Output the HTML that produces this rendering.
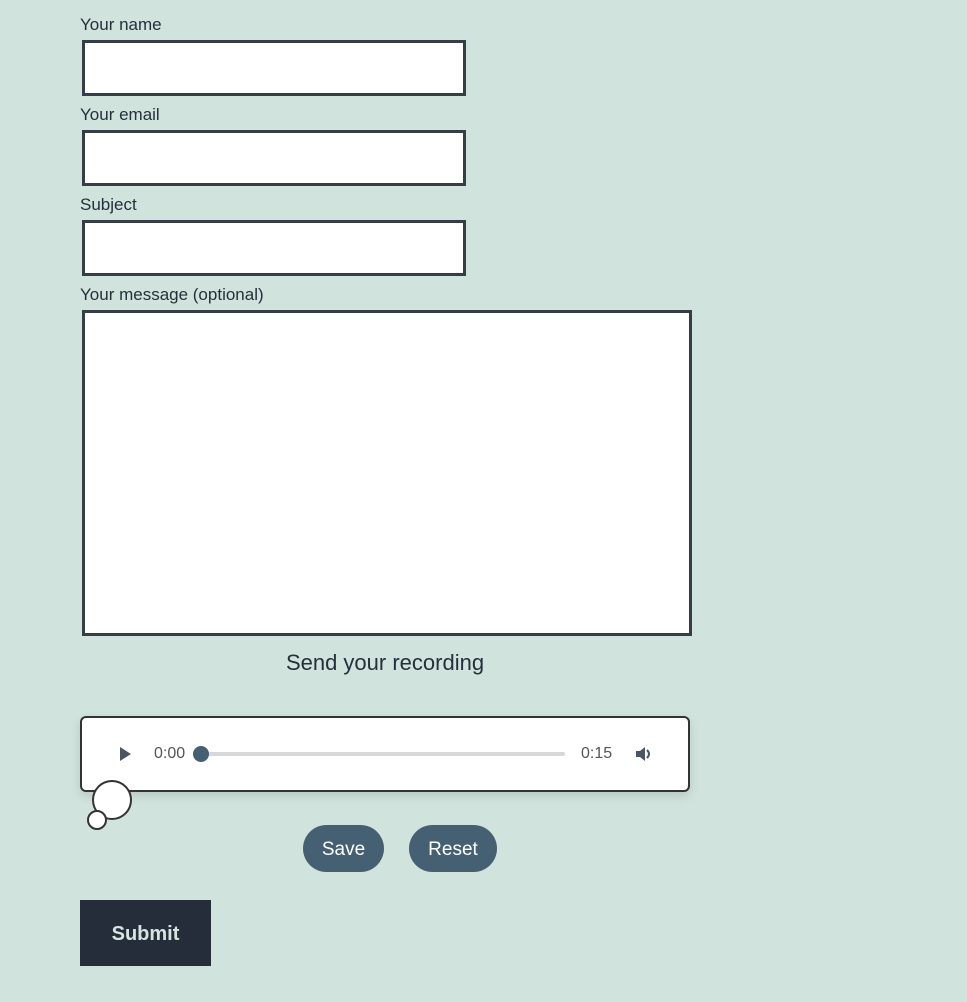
<!DOCTYPE html>
<html><head><style>
body{margin:0;background:#d1e3dd;font-family:"Liberation Sans",sans-serif;color:#24303c;width:967px;height:1002px;position:relative;overflow:hidden}
.l{position:absolute;left:80px;font-size:17px}
.in{position:absolute;left:82px;background:#fff;border:3px solid #353d47;box-sizing:border-box}
.btn{position:absolute;top:825px;height:47px;border-radius:24px;background:#466073;color:#fff;font-size:19px;text-align:center;line-height:50px}
</style></head><body>
<div class="l" style="top:15px">Your name</div>
<div class="in" style="top:40px;width:384px;height:56px"></div>
<div class="l" style="top:105px">Your email</div>
<div class="in" style="top:130px;width:384px;height:56px"></div>
<div class="l" style="top:195px">Subject</div>
<div class="in" style="top:220px;width:384px;height:56px"></div>
<div class="l" style="top:285px">Your message (optional)</div>
<div class="in" style="top:310px;width:610px;height:326px"></div>
<div style="position:absolute;left:80px;width:610px;top:650px;text-align:center;font-size:22px">Send your recording</div>
<div style="position:absolute;left:80px;top:716px;width:610px;height:76px;box-sizing:border-box;background:#fff;border:2px solid #333;border-radius:6px;box-shadow:0 4px 10px rgba(0,0,0,.12)">
<svg style="position:absolute;left:36px;top:28px" width="14" height="16"><path d="M2 1L13 8L2 15Z" fill="#4b5563"/></svg>
<span style="position:absolute;left:72px;top:27px;font-size:16px;color:#555">0:00</span>
<div style="position:absolute;left:118px;top:34px;width:365px;height:4px;background:#d8d8d8;border-radius:2px"></div>
<div style="position:absolute;left:111px;top:28px;width:16px;height:16px;border-radius:50%;background:#466073"></div>
<span style="position:absolute;left:499px;top:27px;font-size:16px;color:#555">0:15</span>
<svg style="position:absolute;left:552px;top:27px" width="20" height="18"><path d="M2 6H6L11 2V16L6 12H2Z" fill="#4b5563"/><path d="M13 5Q17 9 13 13" stroke="#4b5563" stroke-width="2" fill="none"/></svg>
</div>
<div style="position:absolute;left:92px;top:780px;width:36px;height:36px;border:2px solid #333;border-radius:50%;background:#fff"></div>
<div style="position:absolute;left:87px;top:810px;width:16px;height:16px;border:2px solid #333;border-radius:50%;background:#fff"></div>
<div class="btn" style="left:303px;width:81px">Save</div>
<div class="btn" style="left:409px;width:88px">Reset</div>
<div style="position:absolute;left:80px;top:900px;width:131px;height:66px;background:#252d3a;color:#d5e6e0;font-size:20px;font-weight:bold;text-align:center;line-height:68px">Submit</div>
</body></html>
